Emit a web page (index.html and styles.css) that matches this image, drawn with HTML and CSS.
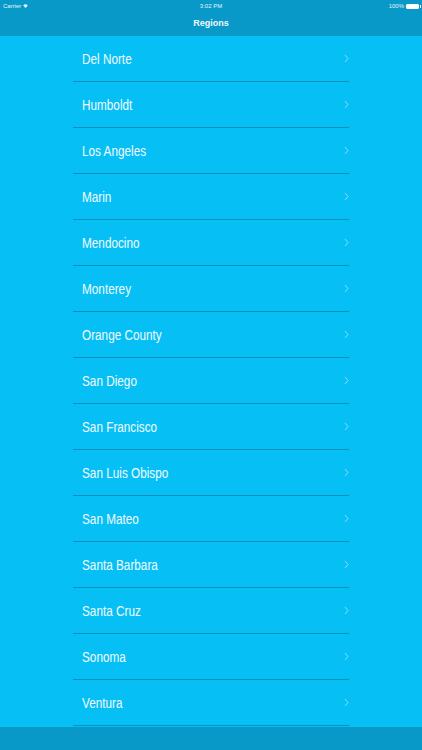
FILE: index.html
```html
<!DOCTYPE html>
<html lang="en">
<head>
  <meta charset="UTF-8" />
  <meta name="viewport" content="width=device-width, initial-scale=1.0"/>
  <title>Regions</title>
  <link rel="stylesheet" href="styles.css">
</head>
<body>
  <header class="topbar">
    <div class="status">
      <div class="status-left">
        Carrier
        <svg class="wifi" width="5" height="4" viewBox="0 0 12 9">
          <path d="M6 9 L0.5 3.2 A8 8 0 0 1 11.5 3.2 Z" fill="#e6f6fc"/>
        </svg>
      </div>
      <div class="status-time">3:02 PM</div>
      <div class="status-right">
        100%
        <span class="battery"><span class="battery-fill"></span></span>
      </div>
    </div>
    <div class="title">Regions</div>
  </header>

  <main class="content">
    <ul class="regions">
      <li class="region"><span class="name">Del Norte</span><svg class="chev" width="5" height="9" viewBox="0 0 5 9"><path d="M1 1 L4 4.5 L1 8" /></svg></li>
      <li class="region"><span class="name">Humboldt</span><svg class="chev" width="5" height="9" viewBox="0 0 5 9"><path d="M1 1 L4 4.5 L1 8" /></svg></li>
      <li class="region"><span class="name">Los Angeles</span><svg class="chev" width="5" height="9" viewBox="0 0 5 9"><path d="M1 1 L4 4.5 L1 8" /></svg></li>
      <li class="region"><span class="name">Marin</span><svg class="chev" width="5" height="9" viewBox="0 0 5 9"><path d="M1 1 L4 4.5 L1 8" /></svg></li>
      <li class="region"><span class="name">Mendocino</span><svg class="chev" width="5" height="9" viewBox="0 0 5 9"><path d="M1 1 L4 4.5 L1 8" /></svg></li>
      <li class="region"><span class="name">Monterey</span><svg class="chev" width="5" height="9" viewBox="0 0 5 9"><path d="M1 1 L4 4.5 L1 8" /></svg></li>
      <li class="region"><span class="name">Orange County</span><svg class="chev" width="5" height="9" viewBox="0 0 5 9"><path d="M1 1 L4 4.5 L1 8" /></svg></li>
      <li class="region"><span class="name">San Diego</span><svg class="chev" width="5" height="9" viewBox="0 0 5 9"><path d="M1 1 L4 4.5 L1 8" /></svg></li>
      <li class="region"><span class="name">San Francisco</span><svg class="chev" width="5" height="9" viewBox="0 0 5 9"><path d="M1 1 L4 4.5 L1 8" /></svg></li>
      <li class="region"><span class="name">San Luis Obispo</span><svg class="chev" width="5" height="9" viewBox="0 0 5 9"><path d="M1 1 L4 4.5 L1 8" /></svg></li>
      <li class="region"><span class="name">San Mateo</span><svg class="chev" width="5" height="9" viewBox="0 0 5 9"><path d="M1 1 L4 4.5 L1 8" /></svg></li>
      <li class="region"><span class="name">Santa Barbara</span><svg class="chev" width="5" height="9" viewBox="0 0 5 9"><path d="M1 1 L4 4.5 L1 8" /></svg></li>
      <li class="region"><span class="name">Santa Cruz</span><svg class="chev" width="5" height="9" viewBox="0 0 5 9"><path d="M1 1 L4 4.5 L1 8" /></svg></li>
      <li class="region"><span class="name">Sonoma</span><svg class="chev" width="5" height="9" viewBox="0 0 5 9"><path d="M1 1 L4 4.5 L1 8" /></svg></li>
      <li class="region"><span class="name">Ventura</span><svg class="chev" width="5" height="9" viewBox="0 0 5 9"><path d="M1 1 L4 4.5 L1 8" /></svg></li>
    </ul>
  </main>

  <footer class="bottombar"></footer>
</body>
</html>
```

FILE: styles.css
```css
html, body {
  margin: 0;
  padding: 0;
}

body {
  font-family: "Liberation Sans", Arial, sans-serif;
  height: 750px;
  display: flex;
  flex-direction: column;
  background: #06bff5;
  color: #fff;
  overflow: hidden;
}

.topbar {
  height: 36px;
  background: #0899c8;
  flex-shrink: 0;
}

.status {
  height: 12px;
  display: flex;
  align-items: center;
  justify-content: space-between;
  padding: 0 3px;
  font-size: 6px;
  color: #e6f6fc;
  position: relative;
}

.status-left,
.status-right {
  display: flex;
  align-items: center;
  gap: 2px;
}

.status-time {
  position: absolute;
  left: 0;
  right: 0;
  text-align: center;
}

.battery {
  width: 11px;
  height: 3px;
  border: 1px solid #fff;
  border-radius: 1px;
  display: inline-flex;
  position: relative;
}

.battery::after {
  content: "";
  position: absolute;
  right: -3px;
  top: 0;
  width: 1px;
  height: 3px;
  background: #fff;
}

.battery-fill {
  flex: 1;
  background: #fff;
}

.title {
  text-align: center;
  font-weight: bold;
  font-size: 9px;
  line-height: 10px;
  padding-top: 6px;
  color: #f0faff;
}

.content {
  flex: 1;
}

.regions {
  list-style: none;
  margin: 0 0 0 73px;
  padding: 0;
  width: 276px;
}

.region {
  height: 45px;
  border-bottom: 1px solid #0a90bb;
  display: flex;
  align-items: center;
  justify-content: space-between;
  padding: 0 0 0 9px;
  font-size: 14px;
  color: #f2fbff;
}

.name {
  display: inline-block;
  transform: scaleX(0.84);
  transform-origin: left center;
  white-space: nowrap;
}

.chev {
  fill: none;
  stroke: rgba(255, 255, 255, 0.5);
  stroke-width: 1;
  margin-right: 0;
}

.bottombar {
  height: 23px;
  background: #0899c8;
  flex-shrink: 0;
}
```
